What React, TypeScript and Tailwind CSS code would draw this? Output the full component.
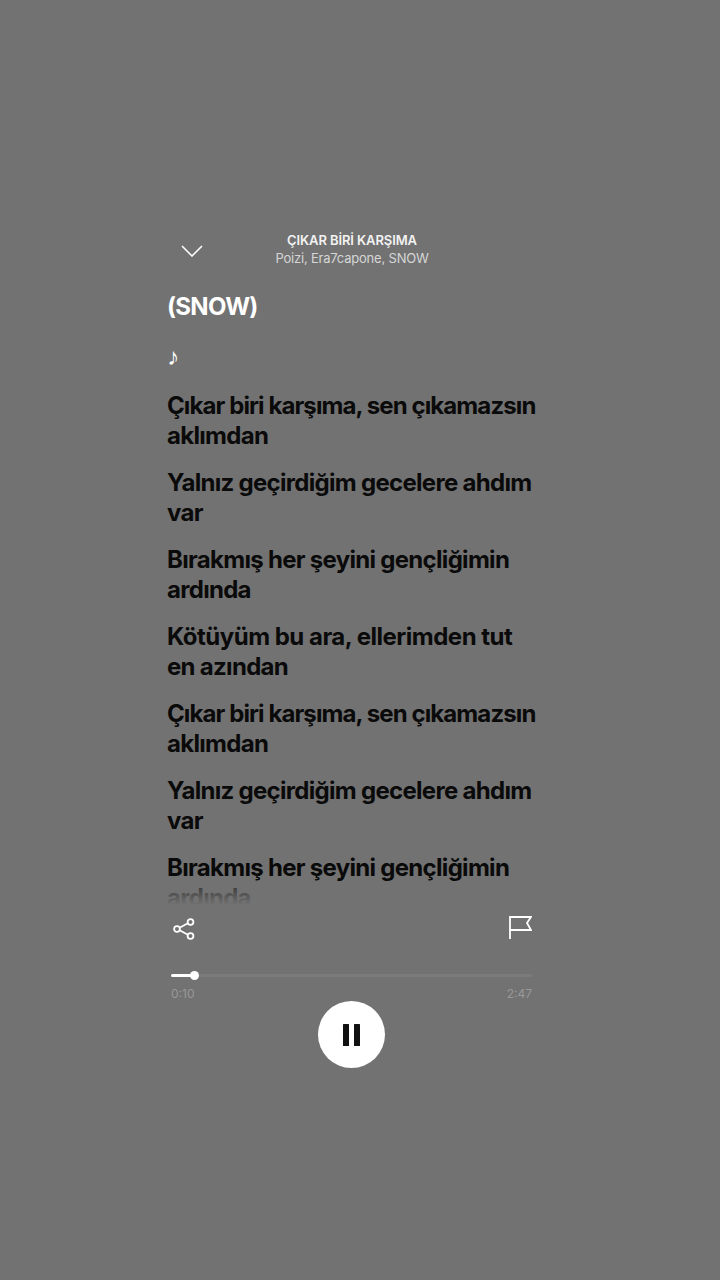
const chorus = "tracking-[-0.9px]";

const lyrics = [
  { first: "Çıkar biri karşıma, sen çıkamazsın", second: "aklımdan", firstClass: chorus },
  { first: "Yalnız geçirdiğim gecelere ahdım", second: "var", firstClass: "" },
  { first: "Bırakmış her şeyini gençliğimin", second: "ardında", firstClass: "" },
  { first: "Kötüyüm bu ara, ellerimden tut", second: "en azından", firstClass: "tracking-[-0.5px]" },
  { first: "Çıkar biri karşıma, sen çıkamazsın", second: "aklımdan", firstClass: chorus },
  { first: "Yalnız geçirdiğim gecelere ahdım", second: "var", firstClass: "" },
  { first: "Bırakmış her şeyini gençliğimin", second: "ardında", firstClass: "" },
];

function ChevronDown() {
  return (
    <svg width="22" height="12" viewBox="0 0 22 12" fill="none" stroke="#fff" strokeWidth="1.6">
      <path d="M1 1l10 10L21 1" />
    </svg>
  );
}

function ShareIcon() {
  return (
    <svg width="22" height="22" viewBox="0 0 22 22" fill="none" stroke="#fff" strokeWidth="1.8">
      <circle cx="17.500" cy="4" r="2.900" />
      <circle cx="4" cy="11" r="2.900" />
      <circle cx="17.500" cy="18" r="2.900" />
      <path d="M6.600 9.700l8.300-4.400M6.600 12.300l8.300 4.400" />
    </svg>
  );
}

function FlagIcon() {
  return (
    <svg width="23" height="23" viewBox="0 0 23 23" fill="none" stroke="#fff" strokeWidth="1.8">
      <path d="M1 23V1h21l-4 6 4 7H1" />
    </svg>
  );
}

function PauseIcon() {
  return (
    <svg width="17" height="22" viewBox="0 0 17 22" fill="#111">
      <rect x="0" y="0" width="6" height="22" rx="0.500" />
      <rect x="11" y="0" width="6" height="22" rx="0.500" />
    </svg>
  );
}

export default function App() {
  return (
    <div className="h-[1280px] bg-[#727272] pt-[231px] pl-[167px] font-['Inter',sans-serif]">
      <div className="w-[368px]">
        {/* top bar */}
        <div className="relative flex h-[38px] flex-col items-center">
          <div className="absolute left-[14px] top-[14px] flex">
            <ChevronDown />
          </div>
          <p className="ml-[2px] text-[13px] leading-[18px] font-semibold tracking-[-0.1px] text-[#f2f2f2]">
            ÇIKAR BİRİ KARŞIMA
          </p>
          <p className="ml-[2px] text-[13px] leading-[18px] tracking-[-0.2px] text-[#d6d6d6]">
            Poizi, Era7capone, SNOW
          </p>
        </div>

        {/* lyrics */}
        <div className="relative mt-[23px] h-[613px] w-[376px] overflow-hidden">
          <div className="flex flex-col gap-[17px] text-[24px] leading-[30px] font-[650] tracking-[-0.7px] text-[#0a0a0a]">
            <p className="mb-[3px] text-white">(SNOW)</p>
            <p className="mb-[2px] text-white">♪</p>
            {lyrics.map((line, i) => (
              <p key={i}>
                <span className={line.firstClass}>{line.first}</span>
                <br />
                {line.second}
              </p>
            ))}
          </div>
          <div className="absolute inset-x-0 bottom-0 h-[18px] bg-gradient-to-b from-[#72727280] to-[#727272]" />
        </div>

        {/* actions */}
        <div className="mt-[11px] flex items-start justify-between pl-[6px] pr-[3px]">
          <div className="flex pt-[2px]">
            <ShareIcon />
          </div>
          <FlagIcon />
        </div>

        {/* progress */}
        <div className="mx-[3px] mt-[34px] ml-[4px]">
          <div className="relative h-[3px] rounded-full bg-[#7b7b7b]">
            <div className="h-full w-[23px] rounded-full bg-white" />
            <div className="absolute left-[19px] top-[-3px] h-[9px] w-[9px] rounded-full bg-white" />
          </div>
          <div className="mt-[10px] flex justify-between text-[12px] leading-[13px] text-[#989898]">
            <span>0:10</span>
            <span>2:47</span>
          </div>
        </div>

        {/* play control */}
        <div className="mt-[1px] flex justify-center pl-[1px]">
          <div className="flex h-[67px] w-[67px] items-center justify-center rounded-full bg-white">
            <PauseIcon />
          </div>
        </div>
      </div>
    </div>
  );
}
